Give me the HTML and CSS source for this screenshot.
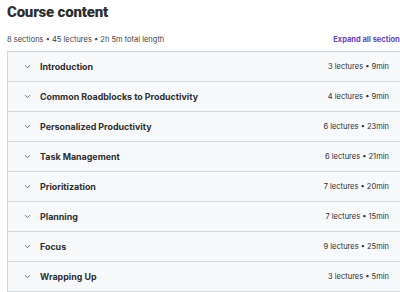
FILE: index.html
```html
<!DOCTYPE html>
<html lang="en">
<head>
  <meta charset="UTF-8" />
  <title>Course content</title>
  <link rel="stylesheet" href="styles.css">
</head>
<body>
  <div class="course">
    <h2 class="title">Course content</h2>
    <div class="meta">
      <span>8 sections • 45 lectures • 2h 5m total length</span>
      <button class="expand">Expand all sections</button>
    </div>
    <div class="sections">
      <div class="section">
        <span class="chev"><svg width="7" height="5" viewBox="0 0 7 5"><path d="M1 1.2l2.5 2.5L6 1.2" fill="none" stroke="#6a6f73" stroke-width="1"/></svg></span>
        <span class="name">Introduction</span>
        <span class="info">3 lectures • 9min</span>
      </div>
      <div class="section">
        <span class="chev"><svg width="7" height="5" viewBox="0 0 7 5"><path d="M1 1.2l2.5 2.5L6 1.2" fill="none" stroke="#6a6f73" stroke-width="1"/></svg></span>
        <span class="name">Common Roadblocks to Productivity</span>
        <span class="info">4 lectures • 9min</span>
      </div>
      <div class="section">
        <span class="chev"><svg width="7" height="5" viewBox="0 0 7 5"><path d="M1 1.2l2.5 2.5L6 1.2" fill="none" stroke="#6a6f73" stroke-width="1"/></svg></span>
        <span class="name">Personalized Productivity</span>
        <span class="info">6 lectures • 23min</span>
      </div>
      <div class="section">
        <span class="chev"><svg width="7" height="5" viewBox="0 0 7 5"><path d="M1 1.2l2.5 2.5L6 1.2" fill="none" stroke="#6a6f73" stroke-width="1"/></svg></span>
        <span class="name">Task Management</span>
        <span class="info">6 lectures • 21min</span>
      </div>
      <div class="section">
        <span class="chev"><svg width="7" height="5" viewBox="0 0 7 5"><path d="M1 1.2l2.5 2.5L6 1.2" fill="none" stroke="#6a6f73" stroke-width="1"/></svg></span>
        <span class="name">Prioritization</span>
        <span class="info">7 lectures • 20min</span>
      </div>
      <div class="section">
        <span class="chev"><svg width="7" height="5" viewBox="0 0 7 5"><path d="M1 1.2l2.5 2.5L6 1.2" fill="none" stroke="#6a6f73" stroke-width="1"/></svg></span>
        <span class="name">Planning</span>
        <span class="info">7 lectures • 15min</span>
      </div>
      <div class="section">
        <span class="chev"><svg width="7" height="5" viewBox="0 0 7 5"><path d="M1 1.2l2.5 2.5L6 1.2" fill="none" stroke="#6a6f73" stroke-width="1"/></svg></span>
        <span class="name">Focus</span>
        <span class="info">9 lectures • 25min</span>
      </div>
      <div class="section">
        <span class="chev"><svg width="7" height="5" viewBox="0 0 7 5"><path d="M1 1.2l2.5 2.5L6 1.2" fill="none" stroke="#6a6f73" stroke-width="1"/></svg></span>
        <span class="name">Wrapping Up</span>
        <span class="info">3 lectures • 5min</span>
      </div>
    </div>
  </div>
</body>
</html>
```

FILE: styles.css
```css
body {
  margin: 0;
  background: #fff;
  color: #2d2f31;
  font-family: Inter, "Noto Sans", sans-serif;
  overflow: hidden;
}

.course {
  width: 397px;
  padding: 2px 0 0 7px;
}

.title {
  margin: 0;
  font-family: Roboto, Inter, sans-serif;
  font-size: 15px;
  font-weight: 900;
  line-height: 20px;
  letter-spacing: -0.2px;
}

.meta {
  display: flex;
  justify-content: space-between;
  align-items: center;
  height: 22px;
  margin-top: 6px;
  font-size: 7.5px;
  color: #3e4143;
}

.expand {
  border: none;
  background: none;
  padding: 0;
  font-family: inherit;
  font-size: 7.5px;
  font-weight: 700;
  color: #6a3fc9;
}

.sections {
  margin-top: 1px;
  border: 1px solid #d1d7dc;
  border-bottom: none;
}

.section {
  display: flex;
  align-items: center;
  height: 29px;
  padding: 0 14px 0 16px;
  background: #f7f9fa;
  border-bottom: 1px solid #d1d7dc;
}

.chev {
  display: flex;
  width: 16px;
}

.name {
  flex: 1;
  font-size: 8.9px;
  font-weight: 700;
}

.info {
  font-size: 7.5px;
}
```
